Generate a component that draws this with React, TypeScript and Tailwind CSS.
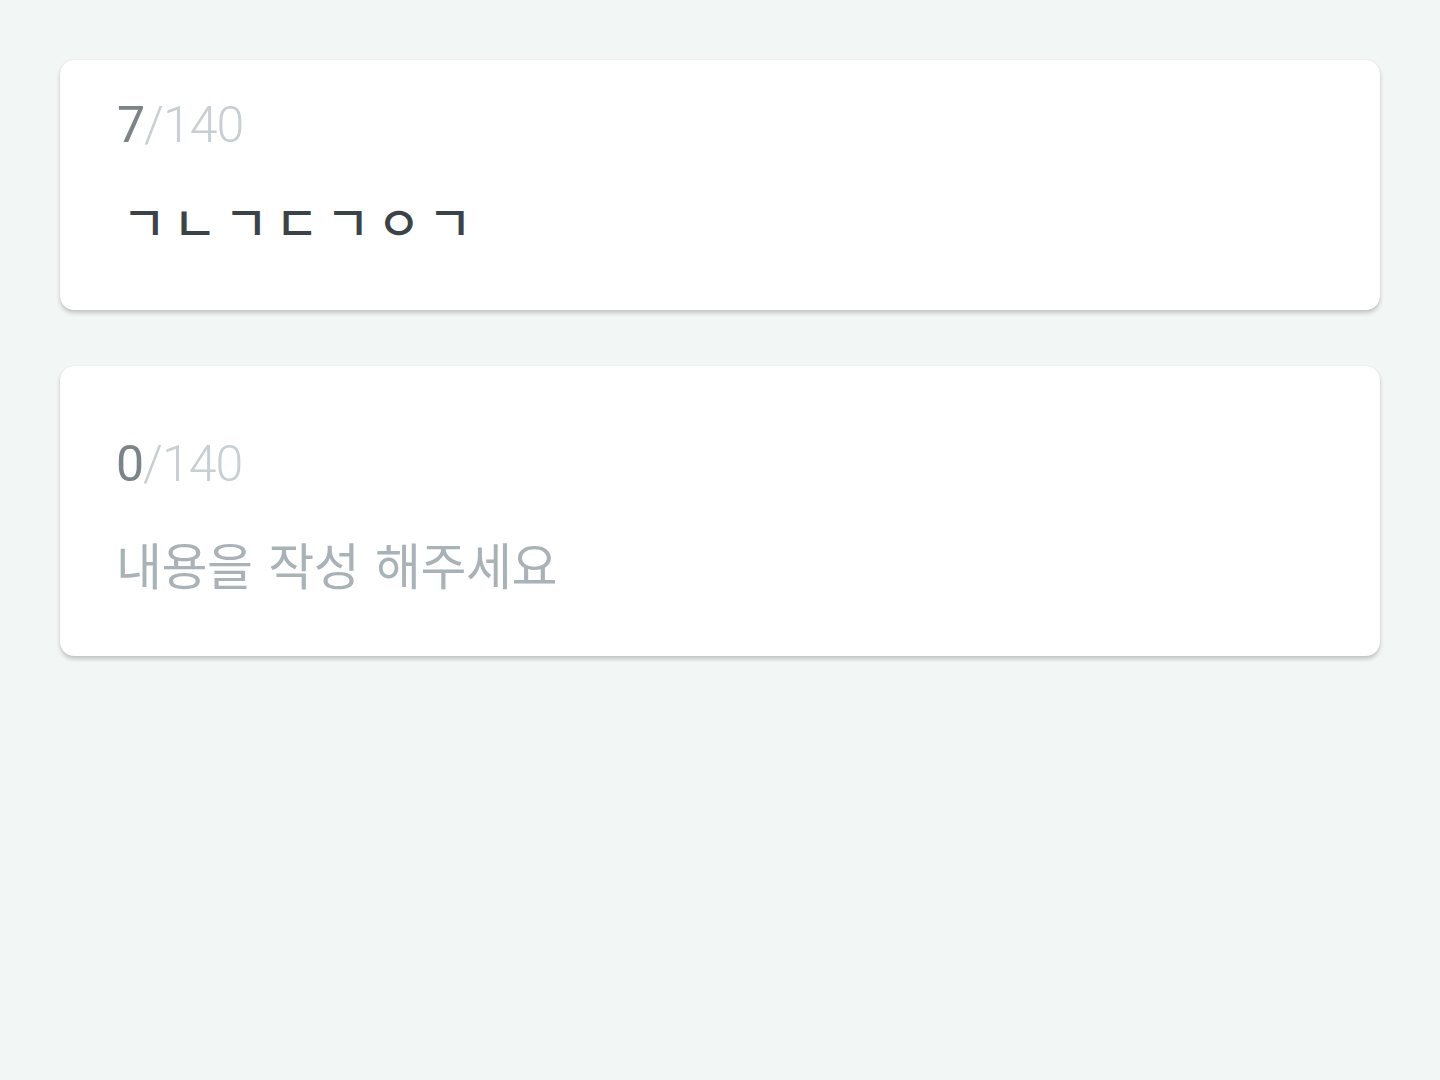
import React from 'react';

const counterFont = { fontFamily: 'Roboto, "Noto Sans CJK KR", sans-serif' };
const koFont = { fontFamily: '"Noto Sans CJK KR", "Noto Sans", sans-serif' };

const Counter: React.FC<{ count: number; max: number }> = ({ count, max }) => (
  <div className="text-[50px] leading-[50px] tracking-[-1px] font-light" style={counterFont}>
    <span className="text-[#7b8487] font-normal">{count}</span>
    <span className="text-[#c7cfd2]">/{max}</span>
  </div>
);

const App: React.FC = () => {
  return (
    <div className="w-full min-h-[1080px] bg-[#f2f6f5] px-[60px] pt-[60px] flex flex-col gap-[56px]">
      {/* filled card */}
      <div className="bg-white rounded-[14px] h-[250px] pl-[57px] pt-[40px] shadow-[0_3px_4px_rgba(0,0,0,0.2),0_0_1px_rgba(0,0,0,0.14)]">
        <Counter count={7} max={140} />
        <div className="mt-[46px] ml-[5px] text-[48px] leading-[48px] tracking-[-2px] font-medium text-[#3b4346] whitespace-pre" style={koFont}>
          ㄱ ㄴ ㄱ ㄷ ㄱ ㅇ ㄱ
        </div>
      </div>

      {/* empty card */}
      <div className="bg-white rounded-[14px] h-[290px] pl-[56px] pt-[73px] shadow-[0_3px_4px_rgba(0,0,0,0.2),0_0_1px_rgba(0,0,0,0.14)]">
        <Counter count={0} max={140} />
        <div className="mt-[48px] text-[50px] leading-[52px] tracking-[-0.5px] [word-spacing:5px] text-[#a9b2b7] whitespace-pre" style={koFont}>
          내용을 작성 해주세요
        </div>
      </div>
    </div>
  );
};

export default App;
